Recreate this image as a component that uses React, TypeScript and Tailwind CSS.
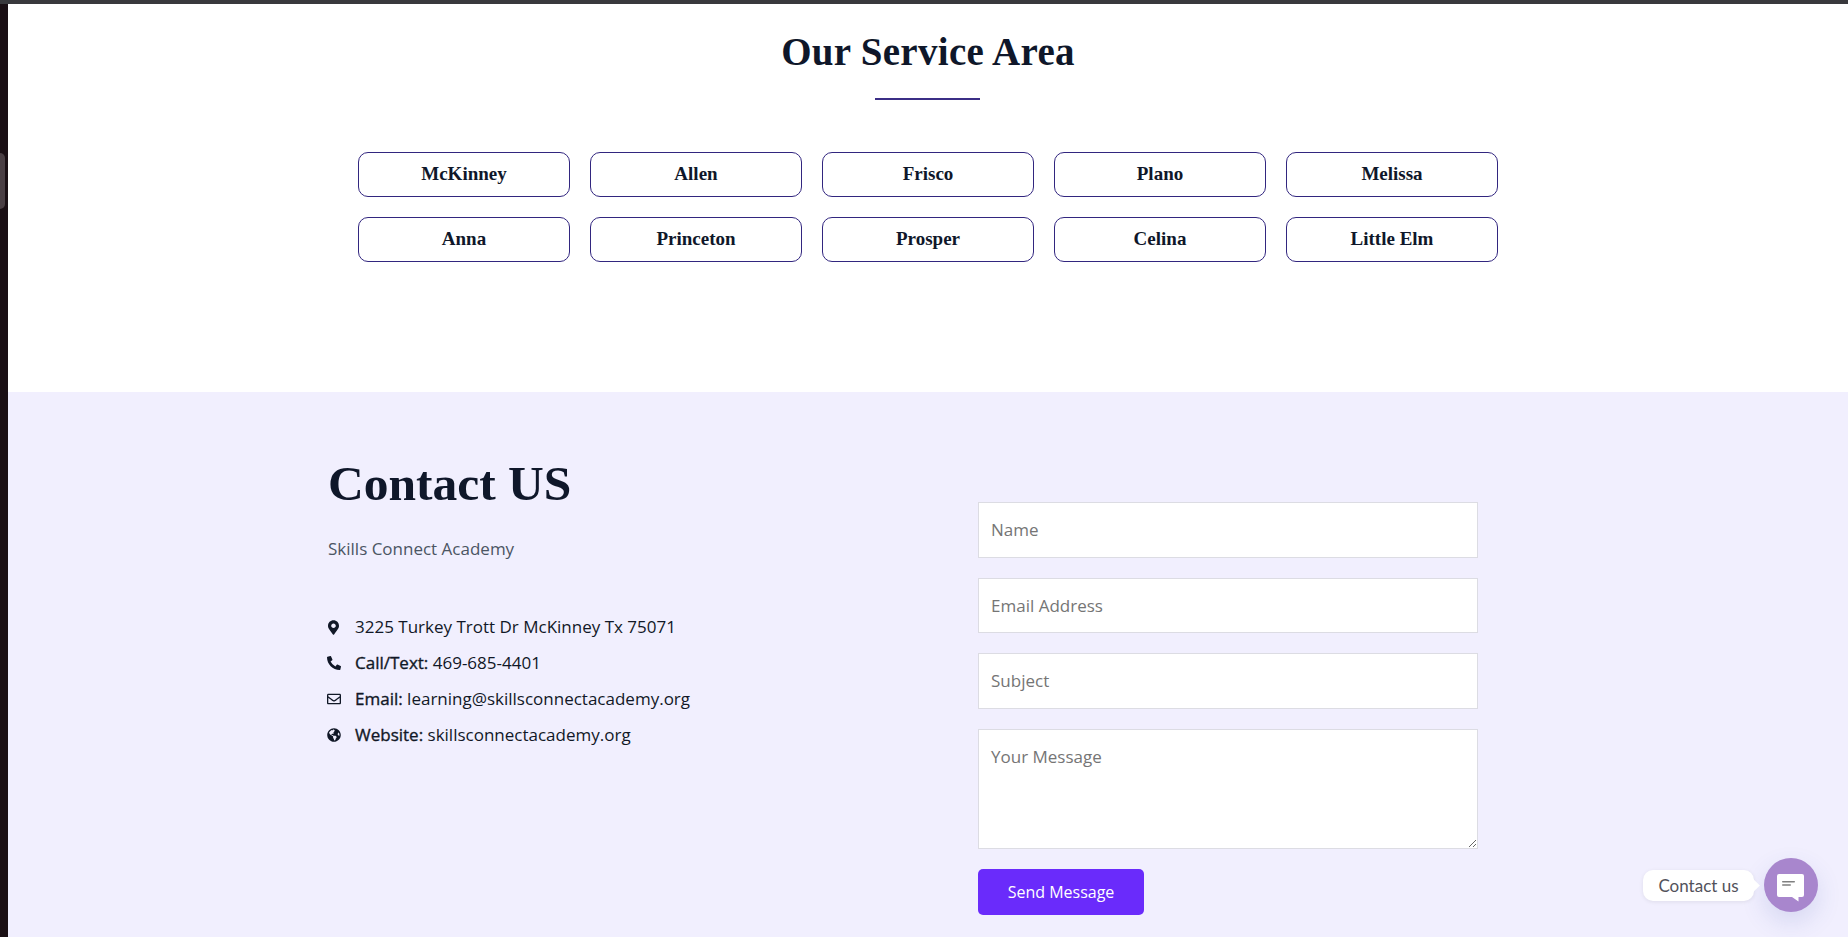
import { FaMapMarkerAlt, FaPhoneAlt, FaRegEnvelope, FaGlobeAmericas } from "react-icons/fa";

const areas = ["McKinney", "Allen", "Frisco", "Plano", "Melissa", "Anna", "Princeton", "Prosper", "Celina", "Little Elm"];

const inputClass =
  "w-full h-[55.5px] bg-white border border-[#dcdce3] px-[12px] text-[17px] text-[#111827] outline-none placeholder:text-[#757575]";

const labelClass = "font-medium [-webkit-text-stroke:0.35px_#111827]";

export default function App() {
  return (
    <div className="relative h-[937px] w-full overflow-hidden flex flex-col bg-[#1a0f14] font-['Open_Sans',sans-serif]">
      <div className="h-[4px] shrink-0 bg-[#39393d]" />
      <div className="absolute left-0 top-[153px] h-[56px] w-[5px] rounded-r-[5px] bg-[#4a3f44]" />

      <main className="ml-[8px] flex-1 flex flex-col min-h-0">
        {/* Service area */}
        <section className="h-[388px] shrink-0 bg-white flex flex-col items-center pt-[24px]">
          <h2 className="font-['Liberation_Serif',serif] text-[39px] leading-[48px] font-bold tracking-[0.3px] text-[#0f172a]">
            Our Service Area
          </h2>
          <div className="mt-[22px] mr-[1px] h-[2px] w-[105px] bg-[#3b2e86]" />
          <div className="mt-[52px] grid grid-cols-5 gap-[20px] w-[1140px]">
            {areas.map((a) => (
              <div
                key={a}
                className="h-[45px] flex items-center justify-center rounded-[10px] border border-[#32267f] font-['Liberation_Serif',serif] text-[19px] font-bold text-[#0f172a]"
              >
                {a}
              </div>
            ))}
          </div>
        </section>

        {/* Contact */}
        <section className="flex-1 bg-[#f1effe] flex pl-[320px]">
          <div className="w-[650px] shrink-0 pt-[59px]">
            <h2 className="font-['Liberation_Serif',serif] text-[49.5px] leading-[65px] font-bold text-[#0f172a]">Contact US</h2>
            <p className="mt-[21px] text-[17px] leading-[24px] text-[#4b5563]">Skills Connect Academy</p>
            <ul className="mt-[54px] flex flex-col gap-[12px] text-[17px] leading-[24px] text-[#111827]">
              <li className="flex items-center">
                <span className="w-[27px] shrink-0"><FaMapMarkerAlt className="h-[15px] w-[11px]" /></span>
                <span>3225 Turkey Trott Dr McKinney Tx 75071</span>
              </li>
              <li className="flex items-center">
                <span className="w-[27px] shrink-0"><FaPhoneAlt className="h-[14px] w-[14px] -ml-[1px]" /></span>
                <span><b className={labelClass}>Call/Text:</b> 469-685-4401</span>
              </li>
              <li className="flex items-center">
                <span className="w-[27px] shrink-0"><FaRegEnvelope className="h-[14px] w-[14px] -ml-[1px]" /></span>
                <span><b className={labelClass}>Email:</b> learning@skillsconnectacademy.org</span>
              </li>
              <li className="flex items-center">
                <span className="w-[27px] shrink-0"><FaGlobeAmericas className="h-[14px] w-[14px] -ml-[1px]" /></span>
                <span><b className={labelClass}>Website:</b> skillsconnectacademy.org</span>
              </li>
            </ul>
          </div>

          <form className="w-[500px] shrink-0 pt-[110px] flex flex-col items-start gap-[20px]">
            <input className={inputClass} placeholder="Name" />
            <input className={inputClass} placeholder="Email Address" />
            <input className={inputClass} placeholder="Subject" />
            <textarea
              className="w-full h-[120.5px] bg-white border border-[#dcdce3] px-[12px] pt-[14px] pb-[10px] text-[17px] text-[#111827] outline-none placeholder:text-[#757575]"
              placeholder="Your Message"
            />
            <button type="button" className="h-[46px] w-[166px] rounded-[5px] bg-[#6a2bfb] text-[16px] text-white">
              Send Message
            </button>
          </form>
        </section>
      </main>

      {/* Chat widget */}
      <div className="absolute right-[30px] bottom-[25px] flex items-center">
        <div className="relative h-[31px] w-[111px] pt-[1px] rounded-[10px] bg-white shadow-[0_1px_4px_rgba(0,0,0,0.08)] flex items-center justify-center text-[17px] text-[#52525b] font-['Lato',sans-serif]">
          Contact us
          <span className="absolute -right-[4px] top-[11px] h-[9px] w-[9px] rotate-45 bg-white" />
        </div>
        <div className="ml-[10px] h-[54px] w-[54px] rounded-full bg-[#a886cd] shadow-[0_10px_24px_rgba(60,80,170,0.15)] flex items-center justify-center">
          <svg width="27" height="28" viewBox="0 0 27 28" className="mr-[2px] mt-[5px]">
            <path d="M2 0h23a2 2 0 0 1 2 2v19a2 2 0 0 1-2 2h-3.5v4.5L15 23H2a2 2 0 0 1-2-2V2a2 2 0 0 1 2-2z" fill="#fff" />
            <rect x="5" y="7" width="13" height="1.5" rx="0.7" fill="#808080" />
            <rect x="5" y="10.2" width="9" height="1.5" rx="0.7" fill="#808080" />
          </svg>
        </div>
      </div>
    </div>
  );
}
